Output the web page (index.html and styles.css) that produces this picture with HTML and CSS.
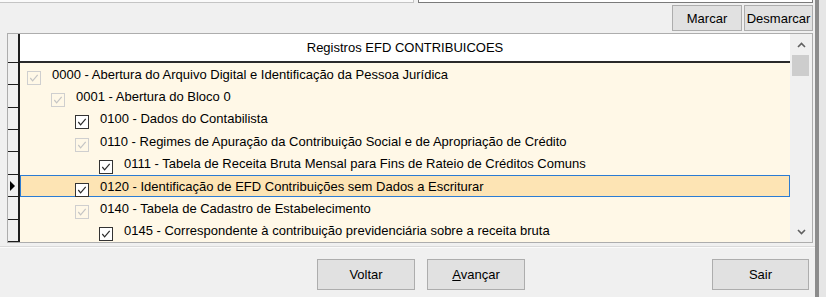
FILE: index.html
```html
<!DOCTYPE html>
<html lang="pt-BR">
<head>
  <meta charset="UTF-8" />
  <title>Registros EFD Contribuicoes</title>
  <link rel="stylesheet" href="styles.css">
</head>
<body>
  <div class="window">
    <div class="top-fields">
      <div class="field field-left"></div>
      <div class="field field-right"></div>
    </div>

    <div class="toolbar">
      <button class="btn btn-small btn-marcar">Marcar</button>
      <button class="btn btn-small btn-desmarcar">Desmarcar</button>
    </div>

    <div class="grid">
      <div class="rows">
        <div class="row header">
          <div class="indicator"></div>
          <div class="cell header-cell">Registros EFD CONTRIBUICOES</div>
        </div>

        <div class="row">
          <div class="indicator"></div>
          <div class="cell lvl0"><span class="cb gray"><svg viewBox="0 0 13 13"><polyline points="2.5,6.5 5,9.5 10.5,3" /></svg></span>0000 - Abertura do Arquivo Digital e Identificação da Pessoa Jurídica</div>
        </div>
        <div class="row">
          <div class="indicator"></div>
          <div class="cell lvl1"><span class="cb gray"><svg viewBox="0 0 13 13"><polyline points="2.5,6.5 5,9.5 10.5,3" /></svg></span>0001 - Abertura do Bloco 0</div>
        </div>
        <div class="row">
          <div class="indicator"></div>
          <div class="cell lvl2"><span class="cb"><svg viewBox="0 0 13 13"><polyline points="2.5,6.5 5,9.5 10.5,3" /></svg></span>0100 - Dados do Contabilista</div>
        </div>
        <div class="row">
          <div class="indicator"></div>
          <div class="cell lvl2"><span class="cb gray"><svg viewBox="0 0 13 13"><polyline points="2.5,6.5 5,9.5 10.5,3" /></svg></span>0110 - Regimes de Apuração da Contribuição Social e de Apropriação de Crédito</div>
        </div>
        <div class="row">
          <div class="indicator"></div>
          <div class="cell lvl3"><span class="cb"><svg viewBox="0 0 13 13"><polyline points="2.5,6.5 5,9.5 10.5,3" /></svg></span>0111 - Tabela de Receita Bruta Mensal para Fins de Rateio de Créditos Comuns</div>
        </div>
        <div class="row selected">
          <div class="indicator"><span class="arrow"></span></div>
          <div class="cell lvl2"><span class="cb"><svg viewBox="0 0 13 13"><polyline points="2.5,6.5 5,9.5 10.5,3" /></svg></span>0120 - Identificação de EFD Contribuições sem Dados a Escriturar</div>
        </div>
        <div class="row">
          <div class="indicator"></div>
          <div class="cell lvl2"><span class="cb gray"><svg viewBox="0 0 13 13"><polyline points="2.5,6.5 5,9.5 10.5,3" /></svg></span>0140 - Tabela de Cadastro de Estabelecimento</div>
        </div>
        <div class="row">
          <div class="indicator"></div>
          <div class="cell lvl3"><span class="cb"><svg viewBox="0 0 13 13"><polyline points="2.5,6.5 5,9.5 10.5,3" /></svg></span>0145 - Correspondente à contribuição previdenciária sobre a receita bruta</div>
        </div>
      </div>

      <div class="scrollbar">
        <div class="scroll-btn"><svg viewBox="0 0 9 6"><polyline points="1,5 4.5,1.5 8,5" /></svg></div>
        <div class="thumb"></div>
        <div class="track"></div>
        <div class="scroll-btn"><svg viewBox="0 0 9 6"><polyline points="1,1 4.5,4.5 8,1" /></svg></div>
      </div>
    </div>

    <div class="separator"></div>

    <div class="footer">
      <button class="btn btn-big">Voltar</button>
      <button class="btn btn-big"><u>A</u>vançar</button>
      <button class="btn btn-big btn-sair">Sair</button>
    </div>
  </div>
  <div class="splitter"></div>
  <div class="edge"></div>
</body>
</html>
```

FILE: styles.css
```css
* {
  box-sizing: border-box;
}

body {
  margin: 0;
  width: 826px;
  height: 297px;
  overflow: hidden;
  display: flex;
  background: #f0f0f0;
  color: #000;
  font-family: 'Liberation Sans', Tahoma, sans-serif;
  font-size: 13px;
}

.window {
  width: 815px;
  display: flex;
  flex-direction: column;
}

.splitter {
  width: 4px;
  background: #8c8c8c;
}

.edge {
  flex: 1;
  background: #e6e6e6;
}

/* top edit fields (cut off by the screenshot) */
.top-fields {
  display: flex;
  height: 3px;
}

.field {
  height: 3px;
  background: #fafafa;
}

.field-left {
  width: 414px;
  border-right: 1px solid #c4c4c4;
  border-bottom: 1px solid #c4c4c4;
}

.field-right {
  width: 395px;
  margin-left: 4px;
  border: 1px solid #7a7a7a;
  border-top: none;
  background: #fff;
}

.toolbar {
  display: flex;
  justify-content: flex-end;
  gap: 2px;
  padding: 2px 2px 0 0;
  height: 30px;
}

.btn {
  font-family: inherit;
  font-size: 13px;
  color: #000;
  background: #e1e1e1;
  border: 1px solid #adadad;
  padding: 0;
  margin: 0;
}

.btn-small {
  height: 26px;
}

.btn-marcar {
  width: 70px;
}

.btn-desmarcar {
  width: 69px;
}

/* data grid */
.grid {
  margin-left: 7px;
  width: 806px;
  height: 210px;
  border: 1px solid #adadad;
  display: flex;
  background: #f0f0f0;
}

.rows {
  flex: 1;
  display: flex;
  flex-direction: column;
}

.row {
  display: flex;
  height: 22.5px;
}

.row.header {
  height: 29px;
}

.indicator {
  width: 12px;
  background: #f0f0f0;
  border-right: 2px solid #1e1e1e;
  border-bottom: 1px solid #1e1e1e;
  display: flex;
  align-items: center;
  justify-content: center;
}

.arrow {
  width: 0;
  height: 0;
  border-top: 5px solid transparent;
  border-bottom: 5px solid transparent;
  border-left: 5px solid #000;
  margin-right: 1px;
}

.cell {
  flex: 1;
  display: flex;
  align-items: center;
  background: #fff8e7;
  white-space: nowrap;
}

.header-cell {
  background: #fff;
  justify-content: center;
  border-bottom: 2px solid #2a2a2a;
}

.selected .cell {
  background: #fde4b4;
  box-shadow: inset 0 0 0 1px #2b7cd3;
}

.lvl0 { padding-left: 7px; }
.lvl1 { padding-left: 31px; }
.lvl2 { padding-left: 55px; }
.lvl3 { padding-left: 79px; }

.cb {
  width: 14px;
  height: 14px;
  margin: 7px 11px 0 0;
  border: 1px solid #333;
  background: #fff;
  display: flex;
}

.cb svg {
  width: 12px;
  height: 12px;
}

.cb polyline {
  fill: none;
  stroke: #2a2a2a;
  stroke-width: 1.3;
}

.cb.gray {
  border-color: #cfcfcf;
  background: transparent;
}

.cb.gray polyline {
  stroke: #c4c4c4;
}

/* vertical scrollbar */
.scrollbar {
  width: 22px;
  display: flex;
  flex-direction: column;
  background: #f0f0f0;
}

.scroll-btn {
  height: 21px;
  display: flex;
  align-items: center;
  justify-content: center;
}

.scroll-btn svg {
  width: 9px;
  height: 6px;
}

.scroll-btn polyline {
  fill: none;
  stroke: #606060;
  stroke-width: 1.6;
}

.thumb {
  height: 21px;
  margin: 0 3px 0 2px;
  background: #cdcdcd;
}

.track {
  flex: 1;
}

.separator {
  margin-top: 3px;
  height: 2px;
  border-top: 1px solid #dadada;
  border-bottom: 1px solid #fbfbfb;
}

.footer {
  display: flex;
  gap: 12px;
  padding: 11px 6px 0 317px;
}

.btn-big {
  width: 98px;
  height: 31px;
}

.btn-sair {
  width: 97px;
  margin-left: auto;
}
```
